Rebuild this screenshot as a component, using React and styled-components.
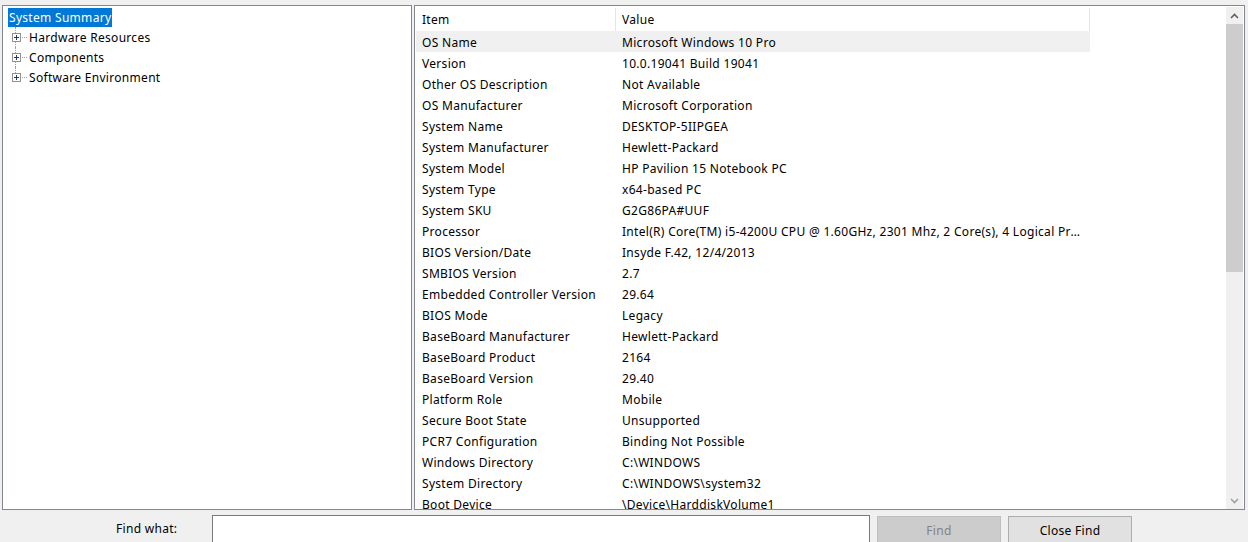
import React from "react";
import styled, { createGlobalStyle } from "styled-components";

const GlobalStyle = createGlobalStyle`
  html, body {
    margin: 0;
    padding: 0;
    background: #f0f0f0;
    font-family: "Noto Sans", "Open Sans", sans-serif;
    font-size: 12px;
    letter-spacing: 0.3px;
    color: #000;
  }
`;

const Window = styled.div`
  width: 1248px;
  height: 542px;
  display: flex;
  flex-direction: column;
  overflow: hidden;
`;

const Panes = styled.div`
  display: flex;
  gap: 2px;
  padding: 5px 3px 0 2px;
  height: 505px;
`;

const Pane = styled.div`
  box-sizing: border-box;
  border: 1px solid #828790;
  background: #fff;
  height: 100%;
  position: relative;
  overflow: hidden;
`;

const TreePane = styled(Pane)`
  width: 410px;
  padding: 2px 0 0 0;
`;

const RootItem = styled.div`
  display: inline-block;
  margin-left: 5px;
  height: 19px;
  line-height: 19px;
  padding: 0 1px;
  background: #0078d7;
  color: #fff;
`;

const TreeRow = styled.div`
  position: relative;
  height: 20px;
  display: flex;
  align-items: center;
  padding-left: 9px;

  &::before {
    content: "";
    position: absolute;
    left: 12px;
    top: 0;
    height: ${(p) => (p.$last ? "50%" : "100%")};
    border-left: 1px dotted #a0a0a0;
  }
`;

const Expander = styled.span`
  position: relative;
  z-index: 1;
  box-sizing: border-box;
  width: 9px;
  height: 9px;
  border: 1px solid #919191;
  background: #fff;
  display: flex;
  align-items: center;
  justify-content: center;
`;

const Connector = styled.span`
  width: 5px;
  margin-left: 1px;
  border-top: 1px dotted #a0a0a0;
`;

const TreeLabel = styled.span`
  margin-left: 2px;
  padding-top: 2px;
  line-height: 18px;
`;

const ListPane = styled(Pane)`
  flex: 1;
  display: flex;
  padding: 2px 0 0 1px;
`;

const Table = styled.div`
  width: 674px;
  display: flex;
  flex-direction: column;
`;

const HeaderRow = styled.div`
  display: flex;
  height: 23px;
  align-items: center;
`;

const HeaderCell = styled.div`
  box-sizing: border-box;
  width: ${(p) => p.$w}px;
  height: 100%;
  padding-left: 6px;
  line-height: 23px;
  border-right: 1px solid #e5e5e5;
`;

const Row = styled.div`
  display: flex;
  height: 21px;
  align-items: center;
  background: ${(p) => (p.$hl ? "#f0f0f0" : "transparent")};
`;

const Cell = styled.div`
  box-sizing: border-box;
  width: ${(p) => p.$w}px;
  padding: 2px 8px 0 6px;
  white-space: nowrap;
  overflow: hidden;
  text-overflow: ellipsis;
  line-height: 19px;
`;

const Scrollbar = styled.div`
  margin-left: auto;
  margin-right: 1px;
  margin-top: -1px;
  width: 17px;
  height: 502px;
  background: #f0f0f0;
  display: flex;
  flex-direction: column;
`;

const ScrollArrow = styled.div`
  height: 17px;
  display: flex;
  align-items: center;
  justify-content: center;
`;

const Thumb = styled.div`
  height: 248px;
  background: #cdcdcd;
`;

const Track = styled.div`
  flex: 1;
`;

const FindBar = styled.div`
  display: flex;
  align-items: flex-start;
  padding-top: 5px;
  height: 32px;
  box-sizing: border-box;
`;

const FindLabel = styled.label`
  margin-left: 116px;
  width: 96px;
  padding-top: 1px;
  line-height: 26px;
`;

const FindInput = styled.input`
  box-sizing: border-box;
  width: 658px;
  height: 28px;
  border: 1px solid #7a7a7a;
  background: #fff;
  font: inherit;
  outline: none;
`;

const Button = styled.button`
  box-sizing: border-box;
  margin-left: 7px;
  margin-top: 1px;
  width: 124px;
  height: 28px;
  font: inherit;
  letter-spacing: 0.3px;
  padding: 0;
  border: 1px solid ${(p) => (p.disabled ? "#bfbfbf" : "#adadad")};
  background: ${(p) => (p.disabled ? "#cccccc" : "#e1e1e1")};
  color: ${(p) => (p.disabled ? "#838383" : "#000")};
`;

const tree = ["Hardware Resources", "Components", "Software Environment"];

const rows = [
  ["OS Name", "Microsoft Windows 10 Pro"],
  ["Version", "10.0.19041 Build 19041"],
  ["Other OS Description", "Not Available"],
  ["OS Manufacturer", "Microsoft Corporation"],
  ["System Name", "DESKTOP-5IIPGEA"],
  ["System Manufacturer", "Hewlett-Packard"],
  ["System Model", "HP Pavilion 15 Notebook PC"],
  ["System Type", "x64-based PC"],
  ["System SKU", "G2G86PA#UUF"],
  ["Processor", "Intel(R) Core(TM) i5-4200U CPU @ 1.60GHz, 2301 Mhz, 2 Core(s), 4 Logical Processor(s)"],
  ["BIOS Version/Date", "Insyde F.42, 12/4/2013"],
  ["SMBIOS Version", "2.7"],
  ["Embedded Controller Version", "29.64"],
  ["BIOS Mode", "Legacy"],
  ["BaseBoard Manufacturer", "Hewlett-Packard"],
  ["BaseBoard Product", "2164"],
  ["BaseBoard Version", "29.40"],
  ["Platform Role", "Mobile"],
  ["Secure Boot State", "Unsupported"],
  ["PCR7 Configuration", "Binding Not Possible"],
  ["Windows Directory", "C:\\WINDOWS"],
  ["System Directory", "C:\\WINDOWS\\system32"],
  ["Boot Device", "\\Device\\HarddiskVolume1"],
  ["Locale", "United States"],
];

const Plus = () => (
  <svg width="7" height="7" viewBox="0 0 7 7">
    <path d="M1 3.5h5M3.5 1v5" stroke="#1e3c78" strokeWidth="1" shapeRendering="crispEdges" />
  </svg>
);

const Chevron = ({ up }) => (
  <svg width="9" height="6" viewBox="0 0 9 6">
    <path
      d={up ? "M1 5L4.5 1.5L8 5" : "M1 1L4.5 4.5L8 1"}
      fill="none"
      stroke={up ? "#606060" : "#a0a0a0"}
      strokeWidth="1.6"
    />
  </svg>
);

export default function App() {
  return (
    <Window>
      <GlobalStyle />
      <Panes>
        <TreePane>
          <RootItem>System Summary</RootItem>
          {tree.map((t, i) => (
            <TreeRow key={t} $last={i === tree.length - 1}>
              <Expander>
                <Plus />
              </Expander>
              <Connector />
              <TreeLabel>{t}</TreeLabel>
            </TreeRow>
          ))}
        </TreePane>
        <ListPane>
          <Table>
            <HeaderRow>
              <HeaderCell $w={200}>Item</HeaderCell>
              <HeaderCell $w={474}>Value</HeaderCell>
            </HeaderRow>
            {rows.map(([k, v], i) => (
              <Row key={k} $hl={i === 0}>
                <Cell $w={200}>{k}</Cell>
                <Cell $w={474}>{v}</Cell>
              </Row>
            ))}
          </Table>
          <Scrollbar>
            <ScrollArrow>
              <Chevron up />
            </ScrollArrow>
            <Thumb />
            <Track />
            <ScrollArrow>
              <Chevron />
            </ScrollArrow>
          </Scrollbar>
        </ListPane>
      </Panes>
      <FindBar>
        <FindLabel>Find what:</FindLabel>
        <FindInput />
        <Button disabled>Find</Button>
        <Button>Close Find</Button>
      </FindBar>
    </Window>
  );
}
